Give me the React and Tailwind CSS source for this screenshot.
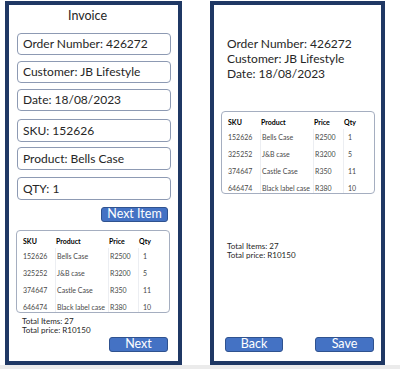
import React from "react";

const items = [
  { sku: "152626", product: "Bells Case", price: "R2500", qty: "1" },
  { sku: "325252", product: "J&B case", price: "R3200", qty: "5" },
  { sku: "374647", product: "Castle Case", price: "R350", qty: "11" },
  { sku: "646474", product: "Black label case", price: "R380", qty: "10" },
];

const font = { fontFamily: "Lato, 'Open Sans', sans-serif" };

const Field = ({ label, className }) => (
  <div
    className={`ml-[8px] w-[154px] flex items-center pl-[5px] border border-[#8d9ab3] rounded-[4px] text-[12px] text-[#262626] ${className}`}
  >
    {label}
  </div>
);

const ItemsTable = ({ className }) => (
  <div
    className={`ml-[7px] w-[154px] h-[83px] border border-[#a5aec0] rounded-[4px] overflow-hidden ${className}`}
  >
    <div className="grid grid-cols-[33px_53px_30px_1fr] pl-[6px] mt-[3px] h-[14px] items-center text-[7px] font-bold text-black">
      <div>SKU</div>
      <div>Product</div>
      <div>Price</div>
      <div>Qty</div>
    </div>
    {items.map((item) => (
      <div
        key={item.sku}
        className="grid grid-cols-[33px_53px_30px_1fr] pl-[6px] h-[17px] items-center text-[7px] text-[#4a4a4a]"
      >
        <div className="h-full flex items-center border-r border-[#eceef2]">
          {item.sku}
        </div>
        <div className="h-full flex items-center pl-[1px] border-r border-[#eceef2]">
          {item.product}
        </div>
        <div className="h-full flex items-center pl-[1px] border-r border-[#eceef2]">
          {item.price}
        </div>
        <div className="h-full flex items-center pl-[4px]">{item.qty}</div>
      </div>
    ))}
  </div>
);

const Totals = ({ className }) => (
  <div className={`text-[8px] leading-[9px] text-[#262626] ${className}`}>
    <div>Total Items: 27</div>
    <div>Total price: R10150</div>
  </div>
);

const Button = ({ children, className }) => (
  <button
    className={`h-[15px] bg-[#4472c4] border border-[#2f528f] rounded-[3px] text-white text-[12.5px] leading-none flex items-center justify-center ${className}`}
  >
    {children}
  </button>
);

const App = () => {
  return (
    <div className="w-[400px] h-[369px] bg-white flex flex-col" style={font}>
      <div className="h-[365px] flex pl-[5px] pt-[1px] gap-[28px]">
        <div className="w-[177px] h-[364px] border-4 border-[#1f3864] flex flex-col">
          <div className="mt-[3px] h-[16px] leading-[16px] pl-[59px] text-[12.5px] text-[#262626]">
            Invoice
          </div>
          <Field label="Order Number: 426272" className="mt-[9px] h-[22px]" />
          <Field label="Customer: JB Lifestyle" className="mt-[6px] h-[22px]" />
          <Field label="Date: 18/08/2023" className="mt-[6px] h-[22px]" />
          <Field label="SKU: 152626" className="mt-[8px] h-[23px]" />
          <Field label="Product: Bells Case" className="mt-[5px] h-[23px]" />
          <Field label="QTY: 1" className="mt-[7px] h-[23px]" />
          <Button className="mt-[7px] ml-[92px] w-[67px]">Next Item</Button>
          <ItemsTable className="mt-[8px]" />
          <Totals className="mt-[4px] ml-[13px]" />
          <Button className="mt-auto mb-[9px] ml-[100px] w-[59px]">Next</Button>
        </div>
        <div className="w-[175px] h-[364px] border-4 border-[#1f3864] flex flex-col">
          <div className="mt-[31px] pl-[13px] text-[12px] leading-[15px] text-[#262626]">
            <div>Order Number: 426272</div>
            <div>Customer: JB Lifestyle</div>
            <div>Date: 18/08/2023</div>
          </div>
          <ItemsTable className="mt-[30px]" />
          <Totals className="mt-[48px] ml-[13px]" />
          <div className="mt-auto mb-[9px] flex justify-between pl-[11px] pr-[7px]">
            <Button className="w-[58px]">Back</Button>
            <Button className="w-[59px]">Save</Button>
          </div>
        </div>
      </div>
      <div className="h-[4px] bg-[#ebebeb]" />
    </div>
  );
};

export default App;
